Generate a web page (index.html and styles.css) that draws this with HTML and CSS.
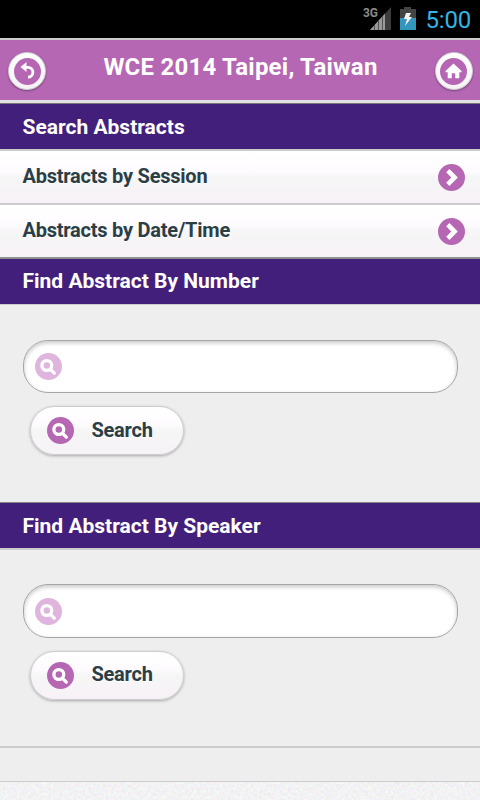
FILE: index.html
```html
<!DOCTYPE html>
<html lang="en">
<head>
<meta charset="utf-8">
<title>WCE 2014 Taipei, Taiwan</title>
<link rel="stylesheet" href="styles.css">
</head>
<body>
<svg class="defs" aria-hidden="true">
  <symbol id="search" viewBox="0 0 27 27">
    <circle cx="13.5" cy="13.5" r="13.5"/>
    <circle class="line" cx="11.8" cy="12.5" r="4.9"/>
    <path class="line" d="M15.5 16.3l3.8 3.8"/>
  </symbol>
  <symbol id="arrow" viewBox="0 0 27 27">
    <circle cx="13.5" cy="13.5" r="13.5"/>
    <path class="chevron" d="M9.8 6.7l6.8 6.8-6.8 6.8"/>
  </symbol>
</svg>
<div class="status">
  <svg class="signal" width="28" height="26" viewBox="0 0 28 26">
    <path fill="#3d3d3d" d="M28 0v23H7z"/>
    <path fill="#999" d="M22 6.5V23H7z"/>
    <path stroke="#555" d="M11.5 18v5M15.5 14v9M19.5 9v14"/>
    <text x="0" y="10" textLength="15" lengthAdjust="spacingAndGlyphs">3G</text>
  </svg>
  <svg class="battery" width="16" height="24" viewBox="0 0 16 24">
    <path fill="#444" d="M4 0h7v2h5v10H0V2h4z"/>
    <path fill="#3296bd" d="M0 11h16v12H0z"/>
    <path fill="#f4f4f4" d="M6 6h5l-2 4h3l-7 9 2-7H4z"/>
  </svg>
  <span class="clock">5:00</span>
</div>
<header class="header">
  <a class="round"><svg width="27" height="27" viewBox="0 0 27 27"><circle cx="13.5" cy="13.5" r="13.5"/><path fill="#fff" d="M6.5 9l6-5v10z"/><path class="back" d="M10 9.3h4a4.9 4.9 0 0 1 0 9.8"/></svg></a>
  <h1>WCE 2014 Taipei, Taiwan</h1>
  <a class="round"><svg width="27" height="27" viewBox="0 0 27 27"><circle cx="13.5" cy="13.5" r="13.5"/><path fill="#fff" d="M13.5 5.5l8 7.5v1.3h-2.2v6h-4.1v-5h-3.4v5H7.7v-6H5.5V13z"/></svg></a>
</header>
<main>
  <h2 class="first">Search Abstracts</h2>
  <a class="row"><span>Abstracts by Session</span><svg class="icon"><use href="#arrow"/></svg></a>
  <a class="row"><span>Abstracts by Date/Time</span><svg class="icon"><use href="#arrow"/></svg></a>
  <h2 class="number">Find Abstract By Number</h2>
  <section class="form form-number">
    <div class="field"><svg class="icon faded"><use href="#search"/></svg></div>
    <button class="button"><svg class="icon"><use href="#search"/></svg><span>Search</span></button>
  </section>
  <h2 class="speaker">Find Abstract By Speaker</h2>
  <section class="form form-speaker">
    <div class="field"><svg class="icon faded"><use href="#search"/></svg></div>
    <button class="button"><svg class="icon"><use href="#search"/></svg><span>Search</span></button>
  </section>
  <div class="blank"></div>
</main>
<svg class="grain" width="480" height="18">
  <filter id="noise" x="0" y="0" width="1" height="1" color-interpolation-filters="sRGB"><feTurbulence type="fractalNoise" baseFrequency=".35" numOctaves="2" seed="4"/><feColorMatrix values=".12 0 0 0 .89  0 .12 0 0 .89  0 0 .12 0 .895  0 0 0 0 1"/></filter>
  <rect width="480" height="18" filter="url(#noise)"/>
</svg>
</body>
</html>
```
FILE: styles.css
```css
* { box-sizing: border-box; }
body { margin: 0; width: 480px; height: 800px; overflow: hidden; background: #eee; color: #2c3e45; font-family: Roboto, "Liberation Sans", sans-serif; }
h1, h2 { margin: 0; color: #fff; font-weight: 700; white-space: nowrap; }
.defs { position: absolute; width: 0; height: 0; }
.status { height: 38px; background: #000; display: flex; justify-content: flex-end; align-items: flex-start; padding-right: 9px; }
.signal { margin-top: 7px; margin-right: 9px; overflow: visible; }
.signal text { font: 700 13px Roboto, sans-serif; fill: #8b8b8b; }
.battery { margin-top: 7px; margin-right: 10px; }
.clock { color: #33b5e5; font-size: 24px; line-height: 40px; letter-spacing: -.2px; }
.header { height: 62px; border-top: 2px solid #ccc; background: #b567b3; display: flex; justify-content: space-between; padding: 12px 7px 0 8px; }
.header h1 { font-size: 24px; line-height: 30px; letter-spacing: .22px; }
.round { width: 38px; height: 38px; border-radius: 50%; background: linear-gradient(#fff, #f5f1f5); border: 1px solid #ccc; box-shadow: 0 1px 2px rgba(0,0,0,.35); display: grid; place-items: center; }
.round circle { fill: #b567b3; }
.back { fill: none; stroke: #fff; stroke-width: 2.8; }
main { display: block; border-top: 3px solid #e2e0e2; }
h2 { background: #431f7c; font-size: 21px; display: flex; align-items: center; padding-left: 22.5px; border-bottom: 2px solid #ccc; }
.first { height: 48px; border-top: 1px solid #78777b; }
.number { height: 46px; border-bottom-width: 1px; padding-bottom: 2px; }
.speaker { height: 48px; border-top: 1px solid #888; }
.row { height: 54px; display: flex; align-items: center; justify-content: space-between; padding: 0 15px 0 22.5px; border-bottom: 2px solid #ccc; background: linear-gradient(#fff 0%, #fefbff 40%, #f6f6f6 50%, #f7f2f7 100%); font-size: 20px; font-weight: 700; letter-spacing: -.23px; text-shadow: 0 1px 0 #fff; }
.row + .row { border-bottom-color: #8c918e; }
.row span { position: relative; top: -1px; }
.icon { width: 27px; height: 27px; fill: #b567b3; flex: none; }
.faded { fill: #dfb5de; }
.line { fill: none; stroke: #fff; stroke-width: 3.3; stroke-linecap: round; }
.chevron { fill: none; stroke: #fff; stroke-width: 4.6; }
.form { padding: 35px 22.5px 0; }
.form-number { height: 197px; }
.form-speaker { height: 198px; border-bottom: 2px solid #ccc; }
.field { height: 53px; border: 1px solid #a5a5a5; border-radius: 25px; background: #fff; box-shadow: inset 0 2px 4px rgba(0,0,0,.22); display: flex; align-items: center; padding-left: 11px; }
.form-speaker .field { margin-top: -1px; height: 54px; }
.button { margin: 13px 0 0 7.5px; width: 154px; height: 49px; border: 1px solid #ccc; border-radius: 25px; background: linear-gradient(#fff 0%, #fefbff 35%, #f6f6f6 50%, #f7f2f7 100%); box-shadow: 0 1px 3px rgba(0,0,0,.3); display: flex; align-items: center; gap: 18px; padding: 0 0 0 15.5px; font: 700 20px Roboto, sans-serif; letter-spacing: -.25px; color: #2c3e45; text-shadow: 0 1px 0 #fff; }
.button span { position: relative; top: -1px; }
.form-speaker .button span { top: -2px; }
.blank { height: 34px; border-bottom: 1px solid #ccc; }
.grain { display: block; }
```
